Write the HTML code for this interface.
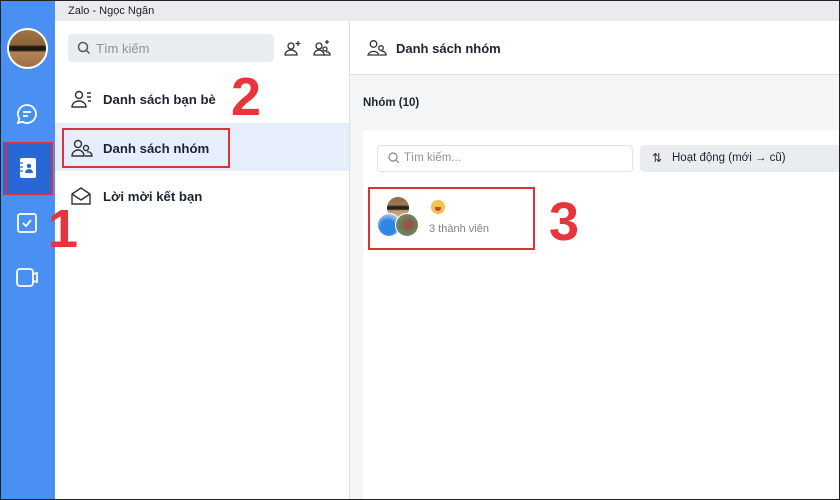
<!DOCTYPE html>
<html><head><meta charset="utf-8"><style>
*{margin:0;padding:0;box-sizing:border-box}
body{width:840px;height:500px;overflow:hidden;position:relative;background:#fff;font-family:"Liberation Sans",sans-serif;color:#1b2430}
.a{position:absolute}
.red{border:2px solid #d9343c}
.num{position:absolute;color:#e8353c;font-weight:bold;font-family:"Liberation Sans",sans-serif}
</style></head><body>
<div class="a" style="left:0;top:0;width:840px;height:500px;border:1px solid #222;z-index:20;pointer-events:none"></div>
<div class="a" style="left:0;top:0;width:55px;height:500px;background:#4a8ff2"></div>
<div class="a" style="left:55px;top:0;width:785px;height:21px;background:#e9ebee"></div>
<div class="a" style="left:68px;top:5px;font-size:11px;color:#222">Zalo - Ngọc Ngân</div>
<div class="a" style="left:7px;top:28px;width:41px;height:41px;border-radius:50%;border:2px solid #fff;background:linear-gradient(#a07545 0%,#8a6338 40%,#1e1a16 45%,#1e1a16 55%,#b38455 60%,#9a7045 100%)"></div>
<svg class="a" style="left:15px;top:102px" width="24" height="24" viewBox="0 0 24 24" fill="none" stroke="#fff" stroke-width="1.8"><path d="M12 3a9 9 0 1 1-4.5 16.8L3 21l1.3-4.3A9 9 0 0 1 12 3z"/><path d="M8 10h8M8 14h5"/></svg>
<div class="a" style="left:3px;top:142px;width:49px;height:53px;background:#2868d6"></div>
<div class="a red" style="left:5px;top:142px;width:48px;height:53px"></div>
<div class="a" style="left:20px;top:158px;width:16px;height:20px;background:#fff;border-radius:2px"></div>
<svg class="a" style="left:20px;top:158px" width="16" height="20"><circle cx="9" cy="8" r="2.2" fill="#2868d6"/><path d="M5 15a4 4 0 0 1 8 0z" fill="#2868d6"/><path d="M0 5h3M0 9h3M0 13h3" stroke="#2868d6" stroke-width="1.2"/></svg>
<svg class="a" style="left:17px;top:213px" width="20" height="20" fill="none" stroke="#fff" stroke-width="1.8"><rect x="1" y="1" width="18" height="18" rx="2"/><path d="M6 10l3 3 5-6"/></svg>
<svg class="a" style="left:16px;top:268px" width="24" height="20" fill="none" stroke="#fff" stroke-width="1.8"><rect x="1" y="1" width="16" height="17" rx="3"/><path d="M17 6l4-1v9l-4-1"/></svg>
<div class="a" style="left:55px;top:21px;width:294px;height:479px;background:#fff"></div>
<div class="a" style="left:68px;top:34px;width:206px;height:28px;background:#eaedf0;border-radius:4px"></div>
<svg class="a" style="left:77px;top:41px" width="14" height="14" fill="none" stroke="#555" stroke-width="1.5"><circle cx="6" cy="6" r="4.5"/><path d="M9.5 9.5l3 3"/></svg>
<div class="a" style="left:96px;top:41px;font-size:13px;color:#8a939e">Tìm kiếm</div>
<svg class="a" style="left:284px;top:39px" width="18" height="18" fill="none" stroke="#333" stroke-width="1.3"><circle cx="7" cy="7" r="3"/><path d="M1 16a6 5 0 0 1 12 0z"/><path d="M14 2v5M11.5 4.5h5"/></svg>
<svg class="a" style="left:313px;top:39px" width="18" height="18" fill="none" stroke="#333" stroke-width="1.3"><circle cx="6" cy="7" r="3"/><path d="M1 16a5 5 0 0 1 10 0z"/><circle cx="12" cy="10" r="2"/><path d="M10 16h7a3 3 0 0 0-4-3"/><path d="M14 1v4M12 3h4"/></svg>
<svg class="a" style="left:71px;top:89px" width="22" height="20" fill="none" stroke="#333" stroke-width="1.4"><circle cx="8" cy="6" r="3.5"/><path d="M1 18a7 6 0 0 1 14 0z"/><path d="M16 4h4M16 8h4M17 12h3"/></svg>
<div class="a" style="left:103px;top:92px;font-size:13.2px;font-weight:bold;color:#1b2430">Danh sách bạn bè</div>
<div class="num" style="left:231px;top:66px;font-size:54px">2</div>
<div class="a" style="left:55px;top:123px;width:294px;height:48px;background:#e6eefb"></div>
<div class="a red" style="left:62px;top:128px;width:168px;height:40px"></div>
<svg class="a" style="left:71px;top:138px" width="22" height="20" fill="none" stroke="#333" stroke-width="1.4"><circle cx="7" cy="6" r="3.5"/><path d="M1 18a6 6 0 0 1 12 0z"/><circle cx="15" cy="10" r="2.5"/><path d="M14 18h7a4 4 0 0 0-5-4"/></svg>
<div class="a" style="left:103px;top:141px;font-size:13.2px;font-weight:bold">Danh sách nhóm</div>
<svg class="a" style="left:71px;top:187px" width="20" height="18" fill="none" stroke="#333" stroke-width="1.4"><path d="M1 7L10 1l9 6v10H1z"/><path d="M1 7l9 6 9-6"/></svg>
<div class="a" style="left:103px;top:189px;font-size:13.2px;font-weight:bold">Lời mời kết bạn</div>
<div class="num" style="left:48px;top:198px;font-size:54px">1</div>
<div class="a" style="left:349px;top:21px;width:1px;height:479px;background:#dcdfe3"></div>
<div class="a" style="left:350px;top:21px;width:490px;height:479px;background:#f4f5f7"></div>
<div class="a" style="left:350px;top:21px;width:490px;height:54px;background:#fff;border-bottom:1px solid #dcdfe3"></div>
<svg class="a" style="left:367px;top:39px" width="20" height="18" fill="none" stroke="#333" stroke-width="1.3"><circle cx="6.5" cy="5" r="3.3"/><path d="M1 16a6 6 0 0 1 11 0z"/><circle cx="14" cy="9" r="2.3"/><path d="M13 16h6a3.5 3.5 0 0 0-4.5-3.5"/></svg>
<div class="a" style="left:396px;top:41px;font-size:13px;font-weight:bold;color:#1b2430">Danh sách nhóm</div>
<div class="a" style="left:363px;top:97px;font-size:11.5px;font-weight:bold;color:#1b2430">Nhóm (10)</div>
<div class="a" style="left:363px;top:130px;width:477px;height:370px;background:#fff;border-radius:4px 0 0 0"></div>
<div class="a" style="left:377px;top:145px;width:256px;height:27px;border:1px solid #dfe2e6;border-radius:4px;background:#fff"></div>
<svg class="a" style="left:388px;top:152px" width="12" height="12" fill="none" stroke="#888" stroke-width="1.2"><circle cx="5" cy="5" r="4"/><path d="M8 8l3 3"/></svg>
<div class="a" style="left:404px;top:152px;font-size:11.5px;color:#8a939e">Tìm kiếm...</div>
<div class="a" style="left:640px;top:145px;width:200px;height:27px;background:#eaedf0;border-radius:4px 0 0 4px"></div>
<div class="a" style="left:652px;top:151px;font-size:12px;color:#333">⇅</div>
<div class="a" style="left:672px;top:152px;font-size:11.5px;color:#1b2430">Hoạt động (mới → cũ)</div>
<div class="a red" style="left:368px;top:187px;width:167px;height:63px"></div>
<div class="a" style="left:386px;top:196px;width:24px;height:24px;border-radius:50%;border:1px solid #fff;background:linear-gradient(#8b6a48 0%,#a07a55 35%,#222 45%,#222 55%,#c49a6c 62%,#d9b88a 100%)"></div>
<div class="a" style="left:377px;top:213px;width:24px;height:24px;border-radius:50%;border:1px solid #fff;background:radial-gradient(circle at 45% 60%,#2f86e6 40%,#9ec3e6 70%)"></div>
<div class="a" style="left:395px;top:213px;width:24px;height:24px;border-radius:50%;border:1px solid #fff;background:radial-gradient(circle at 55% 50%,#a34a4a 15%,#6b7a55 45%,#8c8f80 100%)"></div>
<div class="a" style="left:431px;top:200px;width:14px;height:14px;border-radius:50%;background:#f3c24a"></div>
<div class="a" style="left:435px;top:207px;width:6px;height:4px;border-radius:0 0 4px 4px;background:#c9424a"></div>
<div class="a" style="left:429px;top:223px;font-size:11px;color:#7a8391">3 thành viên</div>
<div class="num" style="left:549px;top:191px;font-size:54px">3</div>
</body></html>
